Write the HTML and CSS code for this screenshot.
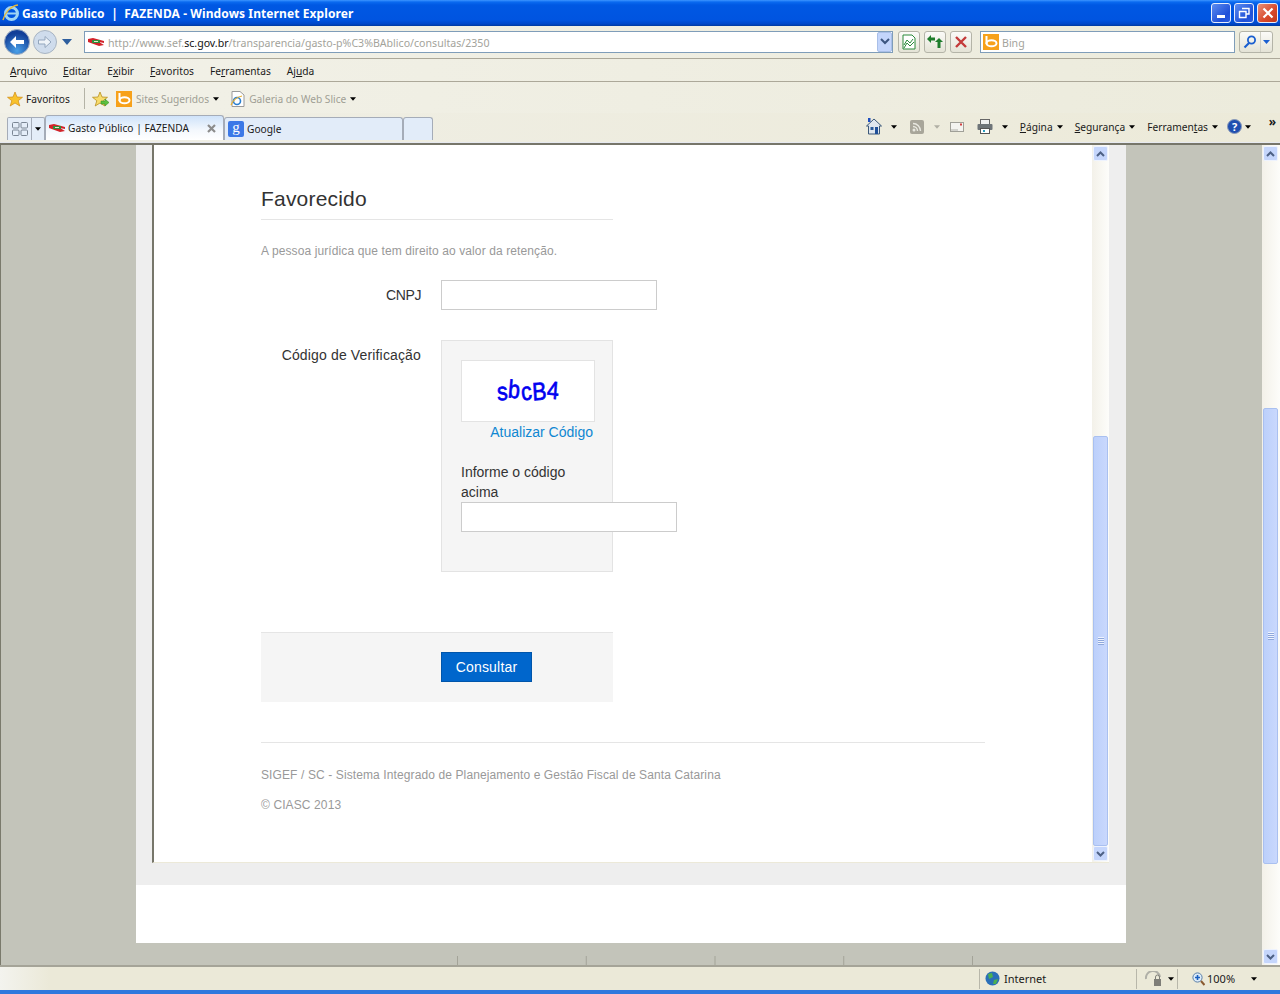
FILE: index.html
```html
<!DOCTYPE html>
<html lang="pt-BR">

<head>
  <meta charset="UTF-8" />
  <title>Gasto Público | FAZENDA - Windows Internet Explorer</title>
  <link rel="stylesheet" href="styles.css">
</head>

<body>
  <svg class="defs" width="0" height="0">
    <defs>
      <radialGradient id="backFill" cx="50%" cy="85%" r="70%">
        <stop offset="0" stop-color="#4aa0e8" />
        <stop offset="1" stop-color="#123f98" />
      </radialGradient>
    </defs>
    <symbol id="flag" viewBox="0 0 16 10">
      <path d="M0 2 L5 1 L16 4 L16 6 L11 5 L16 8 L11 9 L0 5 Z" fill="#d2232a" />
      <rect x="4" y="3" width="8" height="3" fill="#2f8f3a" />
      <rect x="6" y="4" width="4" height="1" fill="#e8e8d0" />
    </symbol>
    <symbol id="bing" viewBox="0 0 16 16">
      <rect width="16" height="16" fill="#f7a11a" />
      <path d="M3.5 2 V10" stroke="#fff" stroke-width="2" fill="none" />
      <ellipse cx="8.5" cy="9.2" rx="5" ry="3" stroke="#fff" stroke-width="2" fill="none" />
    </symbol>
    <symbol id="caret" viewBox="0 0 7 4">
      <path d="M0 0 H7 L3.5 4 Z" fill="#000" />
    </symbol>
  </svg>

  <!-- title bar -->
  <header class="titlebar">
    <svg class="ie-logo" width="18" height="18" viewBox="0 0 18 18">
      <circle cx="9.5" cy="9.5" r="6" fill="none" stroke="#9fd4f5" stroke-width="3" />
      <rect x="4" y="8.5" width="11" height="2" fill="#9fd4f5" />
      <path d="M1 16 C3 8 9 2 16 1" stroke="#e8b838" stroke-width="1.4" fill="none" />
    </svg>
    <h1>Gasto Público &nbsp;|&nbsp; FAZENDA - Windows Internet Explorer</h1>
    <div class="win-buttons">
      <button class="win-btn"><span class="glyph-min"></span></button>
      <button class="win-btn">
        <svg width="12" height="12" viewBox="0 0 12 12"><path d="M4 1.5 H11 V7 H8.5 M1.5 4.5 H8 V10.5 H1.5 Z" stroke="#fff" stroke-width="1.4" fill="none" /></svg>
      </button>
      <button class="win-btn close">
        <svg width="12" height="12" viewBox="0 0 12 12"><path d="M1.5 1.5 L10.5 10.5 M10.5 1.5 L1.5 10.5" stroke="#fff" stroke-width="2.2" /></svg>
      </button>
    </div>
  </header>

  <!-- address row -->
  <div class="navbar">
    <div class="nav-arrows">
      <svg class="back" width="26" height="26" viewBox="0 0 26 26">
        <circle cx="13" cy="13" r="12.5" fill="url(#backFill)" stroke="#9aaac0" />
        <path d="M6 13 L12 7 V11 H20 V15 H12 V19 Z" fill="#fff" />
      </svg>
      <svg class="fwd" width="24" height="24" viewBox="0 0 24 24">
        <circle cx="12" cy="12" r="11.5" fill="#cfdcec" stroke="#a8b4c2" />
        <path d="M18 12 L12 6.5 V10 H5.5 V14 H12 V17.5 Z" fill="#eef3f8" stroke="#93a6bd" />
      </svg>
      <svg class="nav-drop" width="10" height="6" viewBox="0 0 10 6"><path d="M0 0 H10 L5 6 Z" fill="#2e5f9e" /></svg>
    </div>
    <div class="address">
      <svg class="favicon" width="16" height="10"><use href="#flag" /></svg>
      <span class="url">http://www.sef.<b>sc.gov.br</b>/transparencia/gasto-p%C3%BAblico/consultas/2350</span>
      <span class="addr-drop">
        <svg width="10" height="7" viewBox="0 0 10 7"><path d="M1 1 L5 5 L9 1" stroke="#3c5680" stroke-width="2" fill="none" /></svg>
      </span>
    </div>
    <button class="tool-btn">
      <svg width="14" height="16" viewBox="0 0 14 16"><path d="M1 1 H10 L13 4 V15 H1 Z" fill="#fff" stroke="#2a8a3a" /><path d="M2 11 L5 6 L8 9 L11 5 M2 14 L5 9 L8 12 L12 8" stroke="#2a8a3a" fill="none" /></svg>
    </button>
    <button class="tool-btn">
      <svg width="16" height="14" viewBox="0 0 16 14"><path d="M0 4 L4 0 V2.5 H8 V5.5 H4 V8 Z M16 7 L12 3 L8 7 H10.5 V13 H13.5 V7 Z" fill="#1f7d2c" /></svg>
    </button>
    <button class="tool-btn">
      <svg width="12" height="12" viewBox="0 0 12 12"><path d="M1 1 L11 11 M11 1 L1 11" stroke="#c43a3a" stroke-width="2.4" /></svg>
    </button>
    <div class="search">
      <svg width="16" height="16"><use href="#bing" /></svg>
      <span class="search-text">Bing</span>
    </div>
    <div class="search-btn">
      <span class="search-go">
        <svg width="14" height="14" viewBox="0 0 14 14"><circle cx="8.5" cy="5" r="3.6" fill="none" stroke="#1a5fd0" stroke-width="1.8" /><path d="M6 8 L1.5 12.5" stroke="#1a5fd0" stroke-width="2.2" /></svg>
      </span>
      <span class="search-more">
        <svg width="7" height="4" viewBox="0 0 7 4"><path d="M0 0 H7 L3.5 4 Z" fill="#1a5fd0" /></svg>
      </span>
    </div>
  </div>

  <!-- menus -->
  <nav class="menubar">
    <a><u>A</u>rquivo</a>
    <a><u>E</u>ditar</a>
    <a>E<u>x</u>ibir</a>
    <a><u>F</u>avoritos</a>
    <a>Fe<u>r</u>ramentas</a>
    <a>Aj<u>u</u>da</a>
  </nav>

  <!-- favorites -->
  <div class="favbar">
    <span class="fav-main">
      <svg width="16" height="16" viewBox="0 0 16 16"><path d="M8 1 L10 6 L15.5 6.3 L11.2 9.7 L12.8 15 L8 12 L3.2 15 L4.8 9.7 L.5 6.3 L6 6 Z" fill="#f8c22c" stroke="#d08a10" stroke-width=".7" /></svg>
      Favoritos
    </span>
    <span class="fav-sep"></span>
    <svg class="fav-add" width="18" height="16" viewBox="0 0 18 16"><path d="M8 1 L10 6 L15.5 6.3 L11.2 9.7 L12.8 15 L8 12 L3.2 15 L4.8 9.7 L.5 6.3 L6 6 Z" fill="#f8dc6c" stroke="#b89020" stroke-width=".8" /><path d="M9 10 H13 V8 L17 11.5 L13 15 V13 H9 Z" fill="#5cc040" stroke="#2e8a20" stroke-width=".5" /></svg>
    <span class="fav-link">
      <svg width="16" height="16"><use href="#bing" /></svg>
      Sites Sugeridos
      <svg width="6" height="4"><use href="#caret" /></svg>
    </span>
    <span class="fav-link">
      <svg width="15" height="16" viewBox="0 0 15 16"><path d="M2 .5 H10 L14 4 V15.5 H2 Z" fill="#fff" stroke="#9a9a9a" /><circle cx="7" cy="10" r="3.5" fill="none" stroke="#2a7fd0" stroke-width="1.6" /><path d="M1 14 C3 9 7 6 12 5" stroke="#e8b030" stroke-width="1.2" fill="none" /></svg>
      Galeria do Web Slice
      <svg width="6" height="4"><use href="#caret" /></svg>
    </span>
  </div>

  <!-- tabs and command bar -->
  <div class="tabbar">
    <div class="quick-tabs">
      <span class="qt-grid">
        <svg width="16" height="14" viewBox="0 0 16 14"><g fill="none" stroke="#7b8694"><rect x=".5" y=".5" width="6.5" height="5.5" rx="1" /><rect x="9" y=".5" width="6.5" height="5.5" rx="1" /><rect x=".5" y="8" width="6.5" height="5.5" rx="1" /><rect x="9" y="8" width="6.5" height="5.5" rx="1" /></g></svg>
      </span>
      <span class="qt-drop"><svg width="6" height="4"><use href="#caret" /></svg></span>
    </div>
    <div class="tab active">
      <svg width="16" height="10"><use href="#flag" /></svg>
      <span class="tab-title">Gasto Público | FAZENDA</span>
      <svg class="tab-x" width="9" height="9" viewBox="0 0 9 9"><path d="M1 1 L8 8 M8 1 L1 8" stroke="#8c8c8c" stroke-width="2.2" /></svg>
    </div>
    <div class="tab">
      <span class="g-icon">g</span>
      <span class="tab-title">Google</span>
    </div>
    <div class="tab new-tab"></div>

    <div class="commands">
      <svg class="cmd-home" width="16" height="17" viewBox="0 0 16 17"><path d="M8 1 L15.5 8 H13.5 V16 H2.5 V8 H.5 Z" fill="#dfe6ee" stroke="#3c5878" /><rect x="4.5" y="9" width="3" height="3" fill="#2a5a9a" /><rect x="9" y="9" width="3" height="7" fill="#1f4f98" /><rect x="2" y="0" width="2.5" height="4" fill="#1f4fc0" /></svg>
      <svg class="cmd-caret" width="6" height="4"><use href="#caret" /></svg>
      <svg class="cmd-rss" width="14" height="14" viewBox="0 0 14 14"><rect width="14" height="14" rx="2" fill="#a8a69a" /><circle cx="4" cy="10" r="1.5" fill="#e8e8e0" /><path d="M3 6.5 A4.5 4.5 0 0 1 7.5 11 M3 3.5 A7.5 7.5 0 0 1 10.5 11" stroke="#e8e8e0" stroke-width="1.4" fill="none" /></svg>
      <svg class="cmd-caret off" width="6" height="4"><use href="#caret" /></svg>
      <svg class="cmd-mail" width="14" height="10" viewBox="0 0 14 10"><rect x=".5" y=".5" width="13" height="9" fill="#f4f4f0" stroke="#a0a098" /><path d="M1 8 H8" stroke="#b0b0a8" /><rect x="10" y="1.5" width="2" height="2" fill="#d04040" /></svg>
      <svg class="cmd-print" width="16" height="15" viewBox="0 0 16 15"><rect x="3.5" y=".5" width="9" height="5" fill="#f0f0f0" stroke="#666" /><rect x=".5" y="5" width="15" height="6" rx="1" fill="#6e7478" /><rect x="3.5" y="9.5" width="9" height="5" fill="#fff" stroke="#555" /><rect x="6" y="11" width="2" height="2" fill="#2aa0c0" /></svg>
      <svg class="cmd-caret" width="6" height="4"><use href="#caret" /></svg>
      <span class="cmd-text"><span><u>P</u>ágina</span> <svg width="6" height="4"><use href="#caret" /></svg></span>
      <span class="cmd-text"><span><u>S</u>egurança</span> <svg width="6" height="4"><use href="#caret" /></svg></span>
      <span class="cmd-text"><span>Ferramen<u>t</u>as</span> <svg width="6" height="4"><use href="#caret" /></svg></span>
      <span class="help">?</span>
      <svg class="help-caret" width="6" height="4"><use href="#caret" /></svg>
      <span class="chevrons">»</span>
    </div>
  </div>

  <!-- page area -->
  <main class="viewport">
    <div class="desk">
      <div class="page-col">
        <div class="frame">
          <div class="frame-body">
            <section class="form">
              <h2>Favorecido</h2>
              <p class="hint">A pessoa jurídica que tem direito ao valor da retenção.</p>

              <div class="field cnpj">
                <label>CNPJ</label>
                <input type="text" />
              </div>

              <div class="field">
                <label>Código de Verificação</label>
                <div class="captcha">
                  <div class="captcha-img"><span>s</span><span>b</span><span>c</span><span>B</span><span>4</span></div>
                  <a class="captcha-link">Atualizar Código</a>
                  <label class="captcha-label">Informe o código acima</label>
                  <input type="text" />
                </div>
              </div>

              <div class="actions">
                <button class="btn-primary">Consultar</button>
              </div>
            </section>

            <footer class="page-footer">
              <p>SIGEF / SC - Sistema Integrado de Planejamento e Gestão Fiscal de Santa Catarina</p>
              <p>© CIASC 2013</p>
            </footer>
          </div>
          <div class="scrollbar inner">
            <span class="sb-btn"><svg width="9" height="6" viewBox="0 0 9 6"><path d="M1 5 L4.5 1.5 L8 5" stroke="#4d6185" stroke-width="2" fill="none" /></svg></span>
            <span class="sb-track"></span>
            <span class="sb-thumb"></span>
            <span class="sb-btn"><svg width="9" height="6" viewBox="0 0 9 6"><path d="M1 1 L4.5 4.5 L8 1" stroke="#4d6185" stroke-width="2" fill="none" /></svg></span>
          </div>
        </div>
        <div class="band"></div>
      </div>
      <div class="ticks"></div>
    </div>
    <div class="scrollbar outer">
      <span class="sb-btn"><svg width="9" height="6" viewBox="0 0 9 6"><path d="M1 5 L4.5 1.5 L8 5" stroke="#4d6185" stroke-width="2" fill="none" /></svg></span>
      <span class="sb-track"></span>
      <span class="sb-thumb"></span>
      <span class="sb-gap"></span>
      <span class="sb-btn"><svg width="9" height="6" viewBox="0 0 9 6"><path d="M1 1 L4.5 4.5 L8 1" stroke="#4d6185" stroke-width="2" fill="none" /></svg></span>
    </div>
  </main>

  <!-- status bar -->
  <div class="statusbar">
    <span class="st-zone">
      <svg width="15" height="15" viewBox="0 0 15 15"><circle cx="7.5" cy="7.5" r="7" fill="#2a6fb8" /><path d="M3 3 L7 2 L8 6 L4 8 Z M9 9 L13 8 L11 13 L8 13 Z" fill="#4cb050" /></svg>
      Internet
    </span>
    <span class="st-lock">
      <svg width="18" height="16" viewBox="0 0 18 16"><path d="M1 8 A7 7 0 0 1 15 6" stroke="#b0b0a8" stroke-width="2" fill="none" /><rect x="9" y="8" width="7" height="7" fill="#7e7e78" /><path d="M10.5 8 V6 A2 2 0 0 1 14.5 6 V8" stroke="#7e7e78" fill="none" /></svg>
      <svg width="6" height="4"><use href="#caret" /></svg>
    </span>
    <span class="st-zoom">
      <svg width="13" height="14" viewBox="0 0 13 14"><circle cx="5.5" cy="5.5" r="4.6" fill="#dcebf8" stroke="#5a7fa8" /><path d="M3 5.5 H8 M5.5 3 V8" stroke="#1a5fc0" stroke-width="1.6" /><path d="M9 9 L12.5 13" stroke="#8a5a30" stroke-width="2" /></svg>
      100%
      <svg class="zoom-caret" width="6" height="4"><use href="#caret" /></svg>
    </span>
  </div>
  <div class="taskbar"></div>
</body>

</html>
```

FILE: styles.css
```css
* { margin: 0; padding: 0; box-sizing: border-box; }
html, body { height: 100%; }
body {
  font-family: "Noto Sans", sans-serif;
  font-size: 10.2px;
  color: #1a1a1a;
  background-color: #ecebdf;
  display: flex;
  flex-direction: column;
  height: 994px;
  overflow: hidden;
}
svg { flex: none; display: block; }
u { text-decoration: underline; }
.defs { position: absolute; }

/* title bar */
.titlebar {
  height: 26px;
  display: flex;
  align-items: center;
  padding-left: 2px;
  background: linear-gradient(#3d95ff 0, #0a6af0 2px, #0058e3 5px, #0054e0 20px, #0047c8 24px, #003a9e 26px);
}
.titlebar h1 {
  margin-left: 2px;
  font-size: 12px;
  font-weight: 700;
  letter-spacing: 0.1px;
  color: #fff;
  white-space: nowrap;
}
.win-buttons { margin-left: auto; display: flex; gap: 3px; padding-right: 2px; }
.win-btn {
  width: 20px;
  height: 20px;
  border: 1px solid #e8eefc;
  border-radius: 3px;
  background: linear-gradient(135deg, #5c8cf0, #1f50d8 70%, #2a5ce0);
  display: flex;
  align-items: center;
  justify-content: center;
}
.win-btn.close { width: 21px; background: linear-gradient(135deg, #e89078, #d8482a 60%, #c03a1c); }
.glyph-min { width: 8px; height: 3px; background: #fff; margin-top: 7px; }

/* address row */
.navbar {
  height: 33px;
  display: flex;
  align-items: center;
  padding-left: 4px;
  background: linear-gradient(90deg, #f2f1e8, #ecebdc);
  border-bottom: 1px solid #aca899;
}
.nav-arrows {
  width: 80px;
  display: flex;
  align-items: center;
  margin-top: -1px;
}
.fwd { margin-left: 3px; }
.nav-drop { margin-left: 5px; }
.address {
  width: 809px;
  height: 22px;
  display: flex;
  align-items: center;
  background: #fff;
  border: 1px solid #7f9db9;
  padding-left: 3px;
  margin-top: -1px;
}
.url { margin-left: 4px; padding-top: 2px; font-size: 10.6px; color: #a3a39b; white-space: nowrap; }
.url b { font-weight: 400; color: #111; }
.addr-drop {
  margin-left: auto;
  width: 15px;
  height: 20px;
  display: flex;
  align-items: center;
  justify-content: center;
  background: #c3d5fb;
  border: 1px solid #a9bfe8;
  border-radius: 2px;
}
.tool-btn {
  width: 22px;
  height: 22px;
  margin-left: 4px;
  margin-top: -1px;
  border: 1px solid #b4b4a8;
  border-radius: 3px;
  background: linear-gradient(#fbfbf8, #e4e3d6);
  display: flex;
  align-items: center;
  justify-content: center;
}
.address + .tool-btn { margin-left: 5px; }
.search {
  width: 255px;
  height: 22px;
  margin-left: 8px;
  margin-top: -1px;
  display: flex;
  align-items: center;
  gap: 3px;
  background: #fff;
  border: 1px solid #7f9db9;
  padding-left: 2px;
  color: #a3a39b;
}
.search-text { padding-top: 2px; font-size: 10.6px; }
.search-btn {
  width: 34px;
  height: 22px;
  margin-left: 4px;
  margin-top: -1px;
  display: flex;
  border: 1px solid #b4b4a8;
  border-radius: 3px;
  background: linear-gradient(#fbfbf8, #e4e3d6);
}
.search-go { width: 21px; display: flex; align-items: center; justify-content: center; border-right: 1px solid #cfcfc4; }
.search-more { flex: 1; display: flex; align-items: center; justify-content: center; }

/* menus */
.menubar {
  height: 23px;
  display: flex;
  align-items: center;
  padding-left: 10px;
  padding-top: 1px;
  gap: 16px;
  background: linear-gradient(90deg, #f2f1e8, #ecebdc);
  border-bottom: 1px solid #aca899;
}

/* favorites */
.favbar {
  height: 31px;
  display: flex;
  align-items: center;
  padding-left: 7px;
  padding-top: 2px;
  background: linear-gradient(90deg, #f2f1e8, #ecebdc);
  color: #a09f95;
}
.fav-main { display: flex; align-items: center; gap: 3px; color: #1a1a1a; }
.fav-sep { width: 1px; height: 21px; background: #b4b3a6; margin-left: 14px; }
.fav-add { margin-left: 7px; }
.fav-link { display: flex; align-items: center; gap: 4px; margin-left: 6px; white-space: nowrap; }
.fav-link:last-child { margin-left: 11px; }

/* tabs */
.tabbar {
  height: 30px;
  display: flex;
  align-items: flex-end;
  padding-left: 7px;
  padding-bottom: 2px;
  background: linear-gradient(90deg, #f0efe6, #ecead9);
  border-bottom: 1px solid #e6e9f0;
}
.quick-tabs {
  width: 38px;
  height: 23px;
  display: flex;
  border: 1px solid #a5acb8;
  border-bottom: 0;
  border-radius: 2px 2px 0 0;
  background: #e4edf8;
}
.qt-grid { width: 24px; display: flex; align-items: center; justify-content: center; border-right: 1px solid #a5acb8; }
.qt-drop { flex: 1; display: flex; align-items: center; justify-content: center; }
.tab {
  width: 179px;
  height: 23px;
  display: flex;
  align-items: center;
  gap: 3px;
  padding-left: 3px;
  padding-bottom: 1px;
  border: 1px solid #a5acb8;
  border-bottom: 0;
  border-radius: 3px 3px 0 0;
  background: #e2ecf9;
}
.tab.active {
  height: 25px;
  padding-left: 3px;
  padding-bottom: 0;
  background: linear-gradient(#cfe3fa, #f4f8fd 60%, #fff);
}
.tab-title { white-space: nowrap; }
.tab-x { margin-left: auto; margin-right: 7px; }
.new-tab { width: 30px; }
.g-icon {
  width: 16px;
  height: 16px;
  background: #3b78e7;
  color: #fff;
  font-family: "Liberation Serif", serif;
  font-size: 15px;
  line-height: 13px;
  text-align: center;
  border-radius: 2px;
}
.commands {
  margin-left: auto;
  align-self: stretch;
  display: flex;
  align-items: center;
  padding-right: 29px;
  position: relative;
}
.cmd-caret { margin-left: 9px; }
.cmd-rss { margin-left: 13px; }
.cmd-caret.off { margin-left: 10px; opacity: 0.25; }
.cmd-mail { margin-left: 10px; }
.cmd-print { margin-left: 13px; }
.cmd-text { display: flex; align-items: center; gap: 4px; white-space: nowrap; margin-left: 12px; }
.help {
  width: 15px;
  height: 15px;
  margin-left: 9px;
  border-radius: 50%;
  background: #1f4fb0;
  border: 1px solid #8a9ab8;
  color: #fff;
  font-weight: 700;
  font-size: 11px;
  line-height: 13px;
  text-align: center;
}
.help-caret { margin-left: 3px; }
.chevrons {
  position: absolute;
  top: 0;
  right: 4px;
  font-size: 12px;
  font-weight: 700;
}

/* page area */
.viewport {
  flex: 1;
  min-height: 0;
  display: flex;
  border-top: 2px solid #77766a;
}
.desk {
  flex: 1;
  display: flex;
  flex-direction: column;
  background-color: #c3c4ba;
  border-left: 1px solid #7a7a6c;
}
.page-col {
  width: 990px;
  height: 798px;
  margin-left: 135px;
  background: linear-gradient(#eee 0, #eee 740px, #fff 740px);
  display: flex;
  flex-direction: column;
}
.frame {
  height: 718px;
  margin-left: 16px;
  margin-right: 17px;
  display: flex;
  border-left: 2px solid #77766a;
  border-bottom: 1px solid #ece9d8;
  background: #fff;
}
.frame-body {
  flex: 1;
  padding-left: 107px;
  font-family: "Liberation Sans", Arial, sans-serif;
  color: #333;
  font-size: 14px;
}
.ticks {
  flex: 1;
  background-image: linear-gradient(90deg, #a3a398 1px, transparent 1px);
  background-size: 128.75px 9px;
  background-position: 0 bottom;
  background-repeat: repeat-x;
  margin-left: 456px;
  margin-right: 285px;
}

/* form */
.form { width: 352px; }
.form h2 {
  margin-top: 39px;
  height: 36px;
  font-size: 21px;
  font-weight: 400;
  letter-spacing: 0.2px;
  line-height: 30px;
  color: #333;
  border-bottom: 1px solid #e5e5e5;
}
.hint { margin-top: 23px; font-size: 12px; letter-spacing: 0.11px; line-height: 16px; color: #999; white-space: nowrap; }
.field { display: flex; }
.field label { width: 160px; text-align: right; margin-right: 20px; letter-spacing: 0.15px; line-height: 30px; white-space: nowrap; flex: none; }
.field input {
  width: 216px;
  height: 30px;
  border: 1px solid #ccc;
  background: #fff;
  flex: none;
}
.cnpj { margin-top: 21px; margin-bottom: 30px; }
.cnpj label { letter-spacing: -0.4px; }
.captcha {
  width: 172px;
  height: 232px;
  padding: 19px;
  background: #f5f5f5;
  border: 1px solid #e3e3e3;
  flex: none;
}
.captcha-img {
  width: 134px;
  height: 62px;
  background: #fff;
  border: 1px solid #e3e3e3;
  display: flex;
  align-items: center;
  justify-content: center;
}
.captcha-img span {
  display: block;
  font-family: "Liberation Sans", sans-serif;
  font-size: 25px;
  color: #0000f0;
  -webkit-text-stroke: 0.7px #0000f0;
  transform: scaleX(0.85) rotate(-4deg);
  margin: 0 -0.6px;
}
.captcha-img span:nth-child(2) { transform: scaleX(0.85) rotate(6deg) translateY(-2px); }
.captcha-img span:nth-child(3) { transform: scaleX(0.85) rotate(-8deg); }
.captcha-img span:nth-child(5) { transform: scaleX(0.85) rotate(5deg) translateY(-1px); }
.captcha-link { display: block; width: 132px; text-align: right; line-height: 20px; color: #0f87d2; white-space: nowrap; }
.captcha .captcha-label {
  display: block;
  width: 130px;
  margin-top: 20px;
  margin-right: 0;
  letter-spacing: 0;
  line-height: 20px;
  text-align: left;
  white-space: normal;
}
.actions {
  margin-top: 60px;
  height: 70px;
  padding-left: 180px;
  padding-top: 19px;
  background: #f5f5f5;
  border-top: 1px solid #e5e5e5;
}
.btn-primary {
  width: 91px;
  height: 30px;
  border: 1px solid #0055aa;
  background: #0066cc;
  color: #fff;
  font-family: inherit;
  font-size: 14px;
  letter-spacing: 0.2px;
}
.page-footer {
  margin-top: 40px;
  width: 724px;
  padding-top: 24px;
  border-top: 1px solid #e5e5e5;
  font-size: 12px;
  letter-spacing: 0.11px;
  line-height: 16px;
  color: #999;
}
.page-footer p { margin-bottom: 14px; }

/* scrollbars */
.scrollbar {
  width: 17px;
  display: flex;
  flex-direction: column;
  background: linear-gradient(90deg, #f3f1e9, #fdfdfa);
  padding: 1px;
}
.scrollbar.outer { width: 18px; padding-right: 2px; }
.sb-btn {
  height: 15px;
  display: flex;
  align-items: center;
  justify-content: center;
  background: #c5d6fc;
  border: 1px solid #eef3fe;
  border-radius: 2px;
  flex: none;
}
.sb-track { flex: 1; }
.sb-thumb {
  flex: none;
  border: 1px solid #a9c0f0;
  border-radius: 2px;
  background:
    repeating-linear-gradient(#eef3fe 0 1px, #8fa8dc 1px 2px) center / 6px 8px no-repeat,
    linear-gradient(90deg, #bcd0fb, #c9d8fd);
}
.inner .sb-thumb { height: 410px; }
.outer .sb-thumb { height: 456px; }
.sb-gap { height: 85px; flex: none; }

/* status bar */
.statusbar {
  height: 25px;
  display: flex;
  align-items: center;
  border-top: 2px solid #a5a498;
  background: linear-gradient(90deg, #f3f3ee, #ebe9d8 50px);
}
.st-zone {
  margin-left: 979px;
  width: 158px;
  height: 20px;
  padding-left: 5px;
  display: flex;
  align-items: center;
  gap: 4px;
  font-size: 11px;
  border-left: 1px solid #b8b7aa;
  border-right: 1px solid #b8b7aa;
}
.st-lock {
  width: 41px;
  height: 20px;
  padding-left: 8px;
  display: flex;
  align-items: center;
  gap: 5px;
  border-right: 1px solid #b8b7aa;
}
.st-zoom { display: flex; align-items: center; gap: 2px; padding-left: 14px; font-size: 11px; }
.zoom-caret { margin-left: 14px; }
.taskbar { height: 4px; background: #2f78dd; }
```
